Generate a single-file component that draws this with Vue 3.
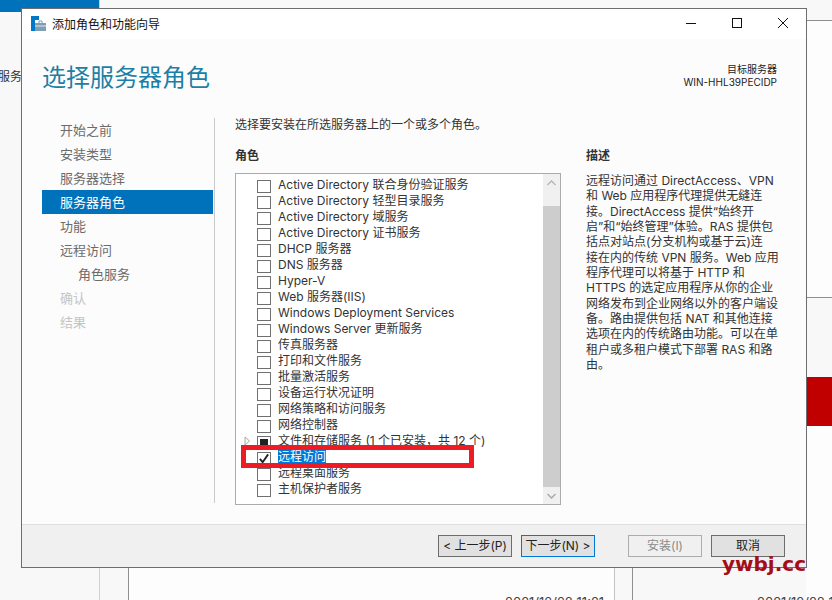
<script setup>
const nav = [
  { t: '开始之前' }, { t: '安装类型' }, { t: '服务器选择' },
  { t: '服务器角色', active: true }, { t: '功能' }, { t: '远程访问' },
  { t: '角色服务', sub: true }, { t: '确认', off: true }, { t: '结果', off: true }
]
const roles = [
  { t: 'Active Directory 联合身份验证服务' }, { t: 'Active Directory 轻型目录服务' },
  { t: 'Active Directory 域服务' }, { t: 'Active Directory 证书服务' },
  { t: 'DHCP 服务器' }, { t: 'DNS 服务器' }, { t: 'Hyper-V' }, { t: 'Web 服务器(IIS)' },
  { t: 'Windows Deployment Services' }, { t: 'Windows Server 更新服务' },
  { t: '传真服务器' }, { t: '打印和文件服务' }, { t: '批量激活服务' }, { t: '设备运行状况证明' },
  { t: '网络策略和访问服务' }, { t: '网络控制器' },
  { t: '文件和存储服务 (1 个已安装，共 12 个)', partial: true, expand: true },
  { t: '远程访问', checked: true }, { t: '远程桌面服务' }, { t: '主机保护者服务' }
]
const desc = [
  '远程访问通过 DirectAccess、VPN', '和 Web 应用程序代理提供无缝连', '接。DirectAccess 提供“始终开',
  '启”和“始终管理”体验。RAS 提供包', '括点对站点(分支机构或基于云)连', '接在内的传统 VPN 服务。Web 应用',
  '程序代理可以将基于 HTTP 和', 'HTTPS 的选定应用程序从你的企业', '网络发布到企业网络以外的客户端设',
  '备。路由提供包括 NAT 和其他连接', '选项在内的传统路由功能。可以在单', '租户或多租户模式下部署 RAS 和路', '由。'
]
</script>

<template>
  <div class="desktop">
    <div class="bg-blue"></div>
    <div class="bg-vline l1"></div>
    <div class="bg-panel"></div>
    <div class="bg-vline l2"></div>
    <div class="bg-vline l3"></div>
    <div class="bg-vline l4"></div>
    <div class="bg-right r1"></div>
    <div class="bg-right r2"></div>
    <div class="bg-right r3"></div>
    <div class="bg-right r4"></div>
    <div class="bg-label">服务</div>
    <div class="bg-date d1">2021/12/28 11:21</div>
    <div class="bg-date d2">2021/12/28 11:21</div>

    <section class="dialog">
      <header class="titlebar">
        <svg class="appicon" width="15" height="15" viewBox="0 0 15 15">
          <rect x="0" y="0" width="4" height="15" fill="#0078c8" />
          <rect x="4" y="0" width="4" height="4" fill="#0078c8" />
          <path d="M4 7h11v8H4z" fill="#7f9db4" />
          <path d="M8 7V5h3v2" fill="none" stroke="#7f9db4" />
          <path d="M4 10h11" stroke="#dfe8ee" />
        </svg>
        <span class="title">添加角色和功能向导</span>
        <div class="winbtns">
          <svg width="12" height="12" viewBox="0 0 12 12"><path d="M1 6.5h10" stroke="#111" /></svg>
          <svg width="12" height="12" viewBox="0 0 12 12"><rect x="1.5" y="1.5" width="9" height="9" fill="none" stroke="#111" /></svg>
          <svg width="12" height="12" viewBox="0 0 12 12"><path d="M1 1l10 10M11 1L1 11" stroke="#111" /></svg>
        </div>
      </header>

      <div class="content">
        <div class="head">
          <h1>选择服务器角色</h1>
          <div class="target">
            <div class="target-label">目标服务器</div>
            <div>WIN-HHL39PECIDP</div>
          </div>
        </div>

        <div class="main">
          <nav class="nav">
            <div v-for="n in nav" :key="n.t" class="nav-item"
              :class="{ active: n.active, sub: n.sub, off: n.off }">{{ n.t }}</div>
          </nav>
          <div class="panel">
            <p class="intro">选择要安装在所选服务器上的一个或多个角色。</p>
            <div class="cols">
              <div class="rolecol">
                <h2>角色</h2>
                <div class="listbox">
                  <ul class="rows">
                    <li v-for="r in roles" :key="r.t" class="row">
                      <span class="expander"><svg v-if="r.expand" width="7" height="10" viewBox="0 0 7 10"><path d="M1 1l4.5 4L1 9z" fill="#fff" stroke="#a6a6a6" /></svg></span>
                      <span class="check" :class="{ partial: r.partial }">
                        <svg v-if="r.checked" width="12" height="11" viewBox="0 0 12 12"><path d="M1.5 6.5L4.5 10L10.5 1.5" fill="none" stroke="#222" stroke-width="2" /></svg>
                      </span>
                      <span class="rolename" :class="{ sel: r.checked }">{{ r.t }}</span>
                    </li>
                  </ul>
                  <div class="scroll">
                    <div class="sbtn top">
                      <svg width="9" height="6" viewBox="0 0 9 6"><path d="M.5 5l4-4 4 4" fill="none" stroke="#b5b5b5" stroke-width="1.3" /></svg>
                    </div>
                    <div class="thumb"></div>
                    <div class="sbtn">
                      <svg width="9" height="6" viewBox="0 0 9 6"><path d="M.5 1l4 4 4-4" fill="none" stroke="#a6a6a6" stroke-width="1.3" /></svg>
                    </div>
                  </div>
                </div>
              </div>
              <aside class="desc">
                <h2>描述</h2>
                <p v-for="d in desc" :key="d">{{ d }}</p>
              </aside>
            </div>
          </div>
        </div>
      </div>

      <footer class="footer">
        <button class="btn">&lt; 上一步(P)</button>
        <button class="btn next">下一步(N) &gt;</button>
        <button class="btn disabled install">安装(I)</button>
        <button class="btn">取消</button>
      </footer>
    </section>

    <div class="redmark"></div>
    <div class="watermark">ywbj.cc</div>
  </div>
</template>

<style>
html, body { margin: 0; padding: 0; }
</style>

<style scoped>
.desktop {
  position: relative;
  width: 832px;
  height: 600px;
  overflow: hidden;
  background: #f8f8f8;
  font-family: Inter, "Noto Sans CJK SC", sans-serif;
  font-size: 12px;
  color: #333;
}
.bg-blue { position: absolute; left: 0; top: 0; width: 99px; height: 12px; background: #0072bc; }
.bg-vline { position: absolute; width: 1px; background: #8f8f8f; }
.l1 { left: 99px; top: 0; height: 600px; background: #d0d0d0; }
.l2 { left: 128px; top: 560px; height: 40px; }
.l3 { left: 614px; top: 560px; height: 40px; background: #c4c4c4; }
.l4 { left: 632px; top: 560px; height: 40px; }
.bg-panel { position: absolute; left: 128px; top: 560px; width: 486px; height: 40px; background: #fdfdfd; }
.bg-right { position: absolute; left: 806px; width: 26px; }
.r1 { top: 20px; height: 276px; background: #fdfdfd; border-top: 1px solid #8f8f8f; }
.r2 { top: 297px; height: 79px; background: #f8f8f8; border-top: 1px solid #8f8f8f; }
.r3 { top: 377px; height: 49px; background: #c00000; }
.r4 { top: 426px; height: 174px; background: #fdfdfd; }
.bg-label { position: absolute; left: -2px; top: 69px; font-size: 12px; color: #333; line-height: 16px; }
.bg-date { position: absolute; top: 595px; font-size: 13px; color: #444; line-height: 14px; white-space: nowrap; }
.d1 { left: 505px; }
.d2 { left: 757px; }

.dialog {
  position: absolute;
  left: 21px;
  top: 8px;
  width: 784px;
  height: 558px;
  border: 1px solid #6d6d6d;
  background: #fcfcfc;
  display: flex;
  flex-direction: column;
}
.titlebar {
  height: 30px;
  flex: none;
  box-sizing: border-box;
  padding: 0 0 2px 9px;
  background: #fff;
  display: flex;
  align-items: center;
}
.appicon { flex: none; }
.title { margin-left: 6px; font-size: 12px; color: #111; }
.winbtns { margin-left: auto; display: flex; gap: 34px; padding-right: 17px; }

.content { flex: 1; min-height: 0; display: flex; flex-direction: column; }
.head { height: 79px; flex: none; display: flex; justify-content: space-between; padding: 22px 29px 0 20px; box-sizing: border-box; }
h1 { margin: 0; font-size: 24px; font-weight: 400; line-height: 34px; color: #1b7fa6; }
.target { text-align: right; font-size: 10px; line-height: 13px; color: #222; padding-top: 2px; }
.target-label { font-size: 10px; }

.main { flex: 1; display: flex; min-height: 0; }
.nav {
  width: 171px;
  margin-left: 20px;
  margin-right: 1px;
  height: 385px;
  position: relative;
}
.nav::after { content: ""; position: absolute; left: 172px; top: 0; width: 1px; height: 385px; background: #c9c9c9; }
.nav-item { height: 24px; line-height: 24px; padding-left: 18px; color: #6b6b6b; font-size: 13px; }
.nav-item.active { background: #0072bc; color: #fff; }
.nav-item.sub { padding-left: 36px; }
.nav-item.off { color: #c4c4c4; }

.panel { margin-left: 21px; flex: 1; min-width: 0; }
.intro { margin: 0; line-height: 14px; font-size: 12px; color: #333; }
.cols { display: flex; margin-top: 16px; }
.rolecol { width: 326px; flex: none; }
h2 { margin: 0; font-size: 12px; font-weight: 700; line-height: 16px; color: #333; }
.listbox {
  width: 326px;
  height: 332px;
  box-sizing: border-box;
  margin-top: 9px;
  border: 1px solid #ababab;
  background: #fff;
  display: flex;
}
.rows { flex: 1; margin: 0; padding: 3px 0 0 8px; list-style: none; }
.row { height: 16px; display: flex; align-items: center; }
.expander { width: 13px; flex: none; display: flex; align-items: center; }
.check {
  width: 12px; height: 11px; flex: none; border: 1px solid #707070; background: #fff;
  display: flex; align-items: center; justify-content: center;
  position: relative; top: 1.5px;
}
.check.partial { background: linear-gradient(#222, #222) center / 8px 8px no-repeat #fff; }
.rolename { margin-left: 7px; white-space: nowrap; font-size: 12px; line-height: 14px; color: #333; }
.rolename.sel { background: #0078d7; color: #fff; }
.scroll { width: 17px; flex: none; display: flex; flex-direction: column; background: #f0f0f0; }
.sbtn { height: 17px; display: flex; align-items: center; justify-content: center; background: #f0f0f0; }
.sbtn.top { height: 32px; align-items: flex-start; padding-top: 6px; box-sizing: border-box; }
.thumb { flex: 1; background: #cdcdcd; }

.desc { margin-left: 25px; width: 200px; flex: none; }
.desc h2 { margin-bottom: 9px; }
.desc p { margin: 0; line-height: 15.33px; white-space: nowrap; font-size: 12px; color: #333; }

.footer {
  height: 43px;
  flex: none;
  box-sizing: border-box;
  background: #f0f0f0;
  border-top: 1px solid #dfdfdf;
  display: flex;
  align-items: flex-start;
  padding: 10px 0 0 416px;
  gap: 9px;
}
.btn {
  width: 74px;
  height: 22px;
  box-sizing: border-box;
  padding: 0;
  border: 1px solid #6d6d6d;
  background: #e1e1e1;
  font: inherit;
  font-size: 12px;
  color: #222;
  line-height: 18px;
  white-space: nowrap;
}
.next { border-color: #0078d7; }
.disabled { background: #f0f0f0; border-color: #adadad; color: #8a8a8a; }
.install { margin-left: 24px; }

.redmark {
  position: absolute;
  left: 241px;
  top: 445px;
  width: 223px;
  height: 13px;
  border: 5px solid #ed1c24;
  pointer-events: none;
}
.watermark {
  position: absolute;
  left: 722px;
  top: 551px;
  font-family: "DejaVu Sans", sans-serif;
  font-size: 20px;
  font-weight: 700;
  line-height: 26px;
  color: #a50d15;
  white-space: nowrap;
}
</style>
